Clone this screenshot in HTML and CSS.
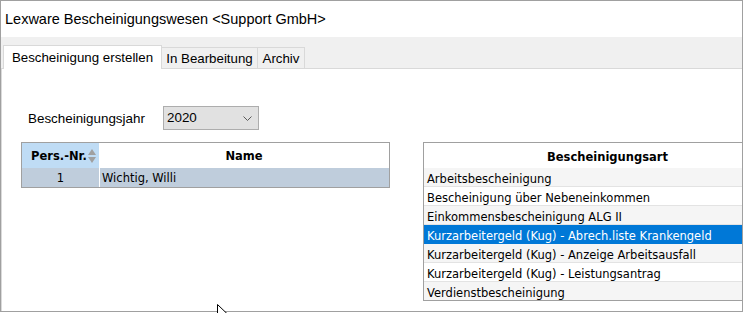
FILE: index.html
```html
<!DOCTYPE html>
<html lang="de">
<head>
<meta charset="utf-8">
<title>Lexware Bescheinigungswesen</title>
<link rel="stylesheet" href="styles.css">
</head>
<body>
<div class="window">
  <div class="titlebar">Lexware Bescheinigungswesen &lt;Support GmbH&gt;</div>
  <div class="tabstrip">
    <div class="tab tab-active tab-w1">Bescheinigung erstellen</div>
    <div class="tab tab-w2">In Bearbeitung</div>
    <div class="tab tab-w3">Archiv</div>
  </div>
  <div class="page">
    <div class="yearrow">
      <span class="label">Bescheinigungsjahr</span>
      <div class="combo">
        <span>2020</span>
        <svg class="chev" width="9" height="5" viewBox="0 0 9 5"><polyline points="0.5,0.5 4.5,4.5 8.5,0.5" fill="none" stroke="#5a5a5a" stroke-width="1"/></svg>
      </div>
    </div>
    <div class="grids">
      <div class="grid-left">
        <div class="lrow lhead">
          <div class="lcell pers-h"><span>Pers.-Nr.</span>
            <svg class="sort" width="8" height="16" viewBox="0 0 8 16"><polygon points="0,7 4,1 8,7" fill="#a0a0a0"/><polygon points="0,9 4,15 8,9" fill="#a0a0a0"/></svg>
          </div>
          <div class="lcell name-h">Name</div>
        </div>
        <div class="lrow ldata">
          <div class="lcell pers-d">1</div>
          <div class="lcell name-d">Wichtig, Willi</div>
        </div>
      </div>
      <div class="grid-right">
        <div class="rhead">Bescheinigungsart</div>
        <div class="rrow alt">Arbeitsbescheinigung</div>
        <div class="rrow">Bescheinigung über Nebeneinkommen</div>
        <div class="rrow alt">Einkommensbescheinigung ALG II</div>
        <div class="rrow sel">Kurzarbeitergeld (Kug) - Abrech.liste Krankengeld</div>
        <div class="rrow alt">Kurzarbeitergeld (Kug) - Anzeige Arbeitsausfall</div>
        <div class="rrow">Kurzarbeitergeld (Kug) - Leistungsantrag</div>
        <div class="rrow alt last">Verdienstbescheinigung</div>
      </div>
    </div>
  </div>
</div>
<svg class="cursor" width="13" height="20" viewBox="0 0 13 20"><path d="M0.5,0.5 L0.5,16.5 L4.5,12.5 L7,18.5 L9.5,17.5 L7,11.5 L12,11.5 Z" fill="#fff" stroke="#000" stroke-width="1" stroke-linejoin="miter"/></svg>
</body>
</html>
```
FILE: styles.css
```css
html, body {
  margin: 0;
  padding: 0;
  background: #fff;
}
body {
  position: relative;
  width: 744px;
  height: 313px;
  overflow: hidden;
  font-family: "Liberation Sans", Arial, sans-serif;
  color: #000;
}
.window {
  width: 743px;
  height: 312px;
  box-sizing: border-box;
  border: 1px solid #a0a0a0;
  overflow: hidden;
  background: #fff;
  display: flex;
  flex-direction: column;
}
.titlebar {
  height: 36px;
  flex: none;
  display: flex;
  align-items: center;
  padding-left: 4px;
  padding-bottom: 1px;
  box-sizing: border-box;
  font-size: 14.5px;
}
.tabstrip {
  flex: none;
  height: 32px;
  box-sizing: border-box;
  background: #f0f0f0;
  border-bottom: 1px solid #d9d9d9;
  display: flex;
  align-items: flex-end;
  padding-left: 2px;
  font-size: 13.3px;
}
.tab {
  height: 21px;
  box-sizing: border-box;
  border-top: 1px solid #d9d9d9;
  border-right: 1px solid #d9d9d9;
  background: #f0f0f0;
  display: flex;
  align-items: center;
  justify-content: center;
  padding-top: 1px;
  white-space: nowrap;
}
.tab-active {
  height: 24px;
  margin-bottom: -1px;
  background: #fff;
  border-left: 1px solid #d9d9d9;
  padding-top: 0;
  padding-bottom: 1px;
  position: relative;
}
.tab-w1 { width: 159px; }
.tab-w2 { width: 96px; }
.tab-w3 { width: 47px; }

.page {
  flex: 1;
  border-left: 1px solid #dadada;
  padding: 37px 0 0 19px;
}
.yearrow {
  display: grid;
  grid-template-columns: 135px 96px;
  align-items: center;
  padding-left: 7px;
  font-size: 13.4px;
}
.combo {
  height: 24px;
  box-sizing: border-box;
  background: #e1e1e1;
  border: 1px solid #adadad;
  display: flex;
  align-items: center;
  justify-content: space-between;
  padding: 0 6px 1px 3px;
}
.chev {
  display: block;
  margin-top: 2px;
}
.grids {
  margin-top: 12px;
  display: flex;
  gap: 33px;
  align-items: flex-start;
}
.grid-left, .grid-right {
  width: 369px;
  flex: none;
  box-sizing: border-box;
  border: 1px solid #a0a0a0;
  font-family: "DejaVu Sans", Verdana, sans-serif;
  font-size: 11.5px;
}
.lrow {
  display: grid;
  grid-template-columns: 77px 1fr;
}
.lhead {
  height: 25px;
  font-weight: bold;
}
.lcell {
  display: flex;
  align-items: center;
}
.pers-h {
  background: #bfdcf5;
  justify-content: flex-end;
  gap: 1px;
  padding-right: 3px;
}
.sort { display: block; }
.name-h {
  justify-content: center;
  background: #fff;
}
.ldata {
  height: 19px;
  background: #fff;
  column-gap: 1px;
}
.pers-d {
  background: #bfcddc;
  justify-content: center;
  padding-top: 1px;
}
.name-d {
  background: #bfcddc;
  padding-left: 2px;
  padding-top: 1px;
}
.rhead {
  height: 25px;
  display: flex;
  align-items: center;
  justify-content: center;
  font-weight: bold;
  padding-top: 2px;
  box-sizing: border-box;
}
.rrow {
  height: 19px;
  box-sizing: border-box;
  border-bottom: 1px solid #e3e3e3;
  display: flex;
  align-items: center;
  padding-left: 3px;
  padding-top: 3px;
  white-space: nowrap;
  background: #fff;
}
.rrow.alt { background: #f5f5f5; }
.rrow.sel {
  background: #0078d7;
  color: #fff;
  border-bottom-color: #0078d7;
}
.rrow.last { border-bottom: none; height: 18px; }
.cursor {
  position: absolute;
  left: 217px;
  top: 304px;
}
```
